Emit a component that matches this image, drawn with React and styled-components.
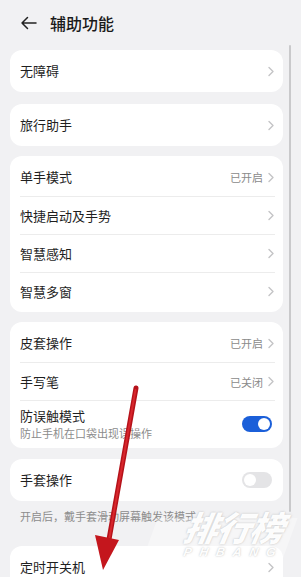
import React from 'react'
import styled, { createGlobalStyle } from 'styled-components'

const GlobalStyle = createGlobalStyle`
  html, body {
    margin: 0;
    padding: 0;
    background: #f1f1f3;
  }
  * { box-sizing: border-box; }
`

const Screen = styled.div`
  position: relative;
  width: 301px;
  height: 577px;
  overflow: hidden;
  background: #f1f1f3;
  font-family: "Noto Sans CJK SC", "Noto Sans", sans-serif;
  color: #1f1f1f;
`

const Header = styled.div`
  display: flex;
  align-items: center;
  height: 46px;
  padding: 0 0 0 20px;
  gap: 13px;
`

const Title = styled.div`
  font-size: 16px;
  font-weight: 500;
  color: #1a1a1a;
`

const List = styled.div`
  display: flex;
  flex-direction: column;
  padding: 4px 18px 0 10px;
`

const Card = styled.div`
  background: #ffffff;
  border-radius: 12px;
  padding: 2px 0;
  margin-bottom: ${(p) => p.gap || 0}px;
`

const Row = styled.div`
  display: flex;
  align-items: center;
  min-height: ${(p) => (p.tall ? 46 : 38)}px;
  margin: 0 8px 0 10px;
  border-top: ${(p) => (p.first ? 'none' : '1px solid #ececec')};
`

const Texts = styled.div`
  flex: 1;
  display: flex;
  flex-direction: column;
  gap: 2px;
`

const Label = styled.div`
  font-size: 13px;
  line-height: 16px;
  color: #1f1f1f;
`

const Sub = styled.div`
  font-size: 11px;
  line-height: 14px;
  color: #8c8c8c;
`

const Value = styled.div`
  font-size: 11px;
  color: #8a8a8a;
  margin-right: 4px;
`

const Toggle = styled.div`
  position: relative;
  width: 30px;
  height: 16px;
  border-radius: 8px;
  background: ${(p) => (p.on ? '#1b5fd9' : '#e4e4e6')};
  margin-right: 3px;

  &::after {
    content: '';
    position: absolute;
    top: 2px;
    left: ${(p) => (p.on ? '16px' : '2px')};
    width: 12px;
    height: 12px;
    border-radius: 50%;
    background: #fff;
  }
`

const Note = styled.div`
  font-size: 11px;
  line-height: 14px;
  color: #8c8c8c;
  padding: 8px 10px 0 10px;
  margin-bottom: 23px;
`

const Scrollbar = styled.div`
  position: absolute;
  left: 289px;
  top: 45px;
  width: 2px;
  height: 467px;
  background: #c9c9cb;
  border-radius: 1px;
`

const Overlay = styled.svg`
  position: absolute;
  left: 0;
  top: 0;
  pointer-events: none;
`

const Watermark = styled.div`
  position: absolute;
  left: 180px;
  top: 508px;
  width: 106px;
  display: flex;
  flex-direction: column;
  align-items: center;
  color: rgba(255, 255, 255, 0.97);
  font-style: italic;
  font-weight: 900;
  transform: skewX(-10deg);
  text-shadow: 0 0 2px rgba(160, 160, 160, 0.7);
`

const WmBig = styled.div`
  font-size: 34px;
  line-height: 38px;
  letter-spacing: -1px;
  font-family: "Noto Sans CJK SC", sans-serif;
`

const WmSmall = styled.div`
  font-size: 12px;
  line-height: 12px;
  letter-spacing: 8px;
  margin-right: -8px;
  font-family: "Liberation Sans", sans-serif;
`

const Band = styled.div`
  position: absolute;
  left: 150px;
  top: 518px;
  width: 140px;
  height: 42px;
  background: rgba(255, 255, 255, 0.35);
  transform: skewX(-20deg);
`

const Chevron = () => (
  <svg width="8" height="11" viewBox="0 0 8 11">
    <path d="M2 1.5 L6 5.5 L2 9.5" fill="none" stroke="#c4c4c6" strokeWidth="1.4" strokeLinecap="round" strokeLinejoin="round" />
  </svg>
)

const BackArrow = () => (
  <svg width="17" height="14" viewBox="0 0 17 14">
    <path d="M16 7 H2 M7.5 1.5 L2 7 L7.5 12.5" fill="none" stroke="#222" strokeWidth="1.5" strokeLinecap="round" strokeLinejoin="round" />
  </svg>
)

const Item = ({ first, label, value, sub, toggle }) => (
  <Row first={first} tall={!!sub}>
    <Texts>
      <Label>{label}</Label>
      {sub && <Sub>{sub}</Sub>}
    </Texts>
    {value && <Value>{value}</Value>}
    {toggle !== undefined ? <Toggle on={toggle} /> : <Chevron />}
  </Row>
)

export default function App() {
  return (
    <Screen>
      <GlobalStyle />
      <Header>
        <BackArrow />
        <Title>辅助功能</Title>
      </Header>
      <List>
        <Card gap={12}>
          <Item first label="无障碍" />
        </Card>
        <Card gap={10}>
          <Item first label="旅行助手" />
        </Card>
        <Card gap={10}>
          <Item first label="单手模式" value="已开启" />
          <Item label="快捷启动及手势" />
          <Item label="智慧感知" />
          <Item label="智慧多窗" />
        </Card>
        <Card gap={11}>
          <Item first label="皮套操作" value="已开启" />
          <Item label="手写笔" value="已关闭" />
          <Item label="防误触模式" sub="防止手机在口袋出现误操作" toggle={true} />
        </Card>
        <Card>
          <Item first label="手套操作" toggle={false} />
        </Card>
        <Note>开启后，戴手套滑动屏幕触发该模式</Note>
        <Card>
          <Item first label="定时开关机" />
        </Card>
      </List>
      <Scrollbar />
      <Band />
      <Watermark>
        <WmBig>排行榜</WmBig>
        <WmSmall>PHBANG</WmSmall>
      </Watermark>
      <Overlay width="301" height="577" viewBox="0 0 301 577">
        <path d="M136 388 L108 545" stroke="#b5121a" strokeWidth="5" strokeLinecap="round" />
        <path d="M135.5 390 L109 540" stroke="#d8262c" strokeWidth="2" strokeLinecap="round" />
        <polygon points="95,535 119,540 103,570" fill="#c4161d" />
      </Overlay>
    </Screen>
  )
}
